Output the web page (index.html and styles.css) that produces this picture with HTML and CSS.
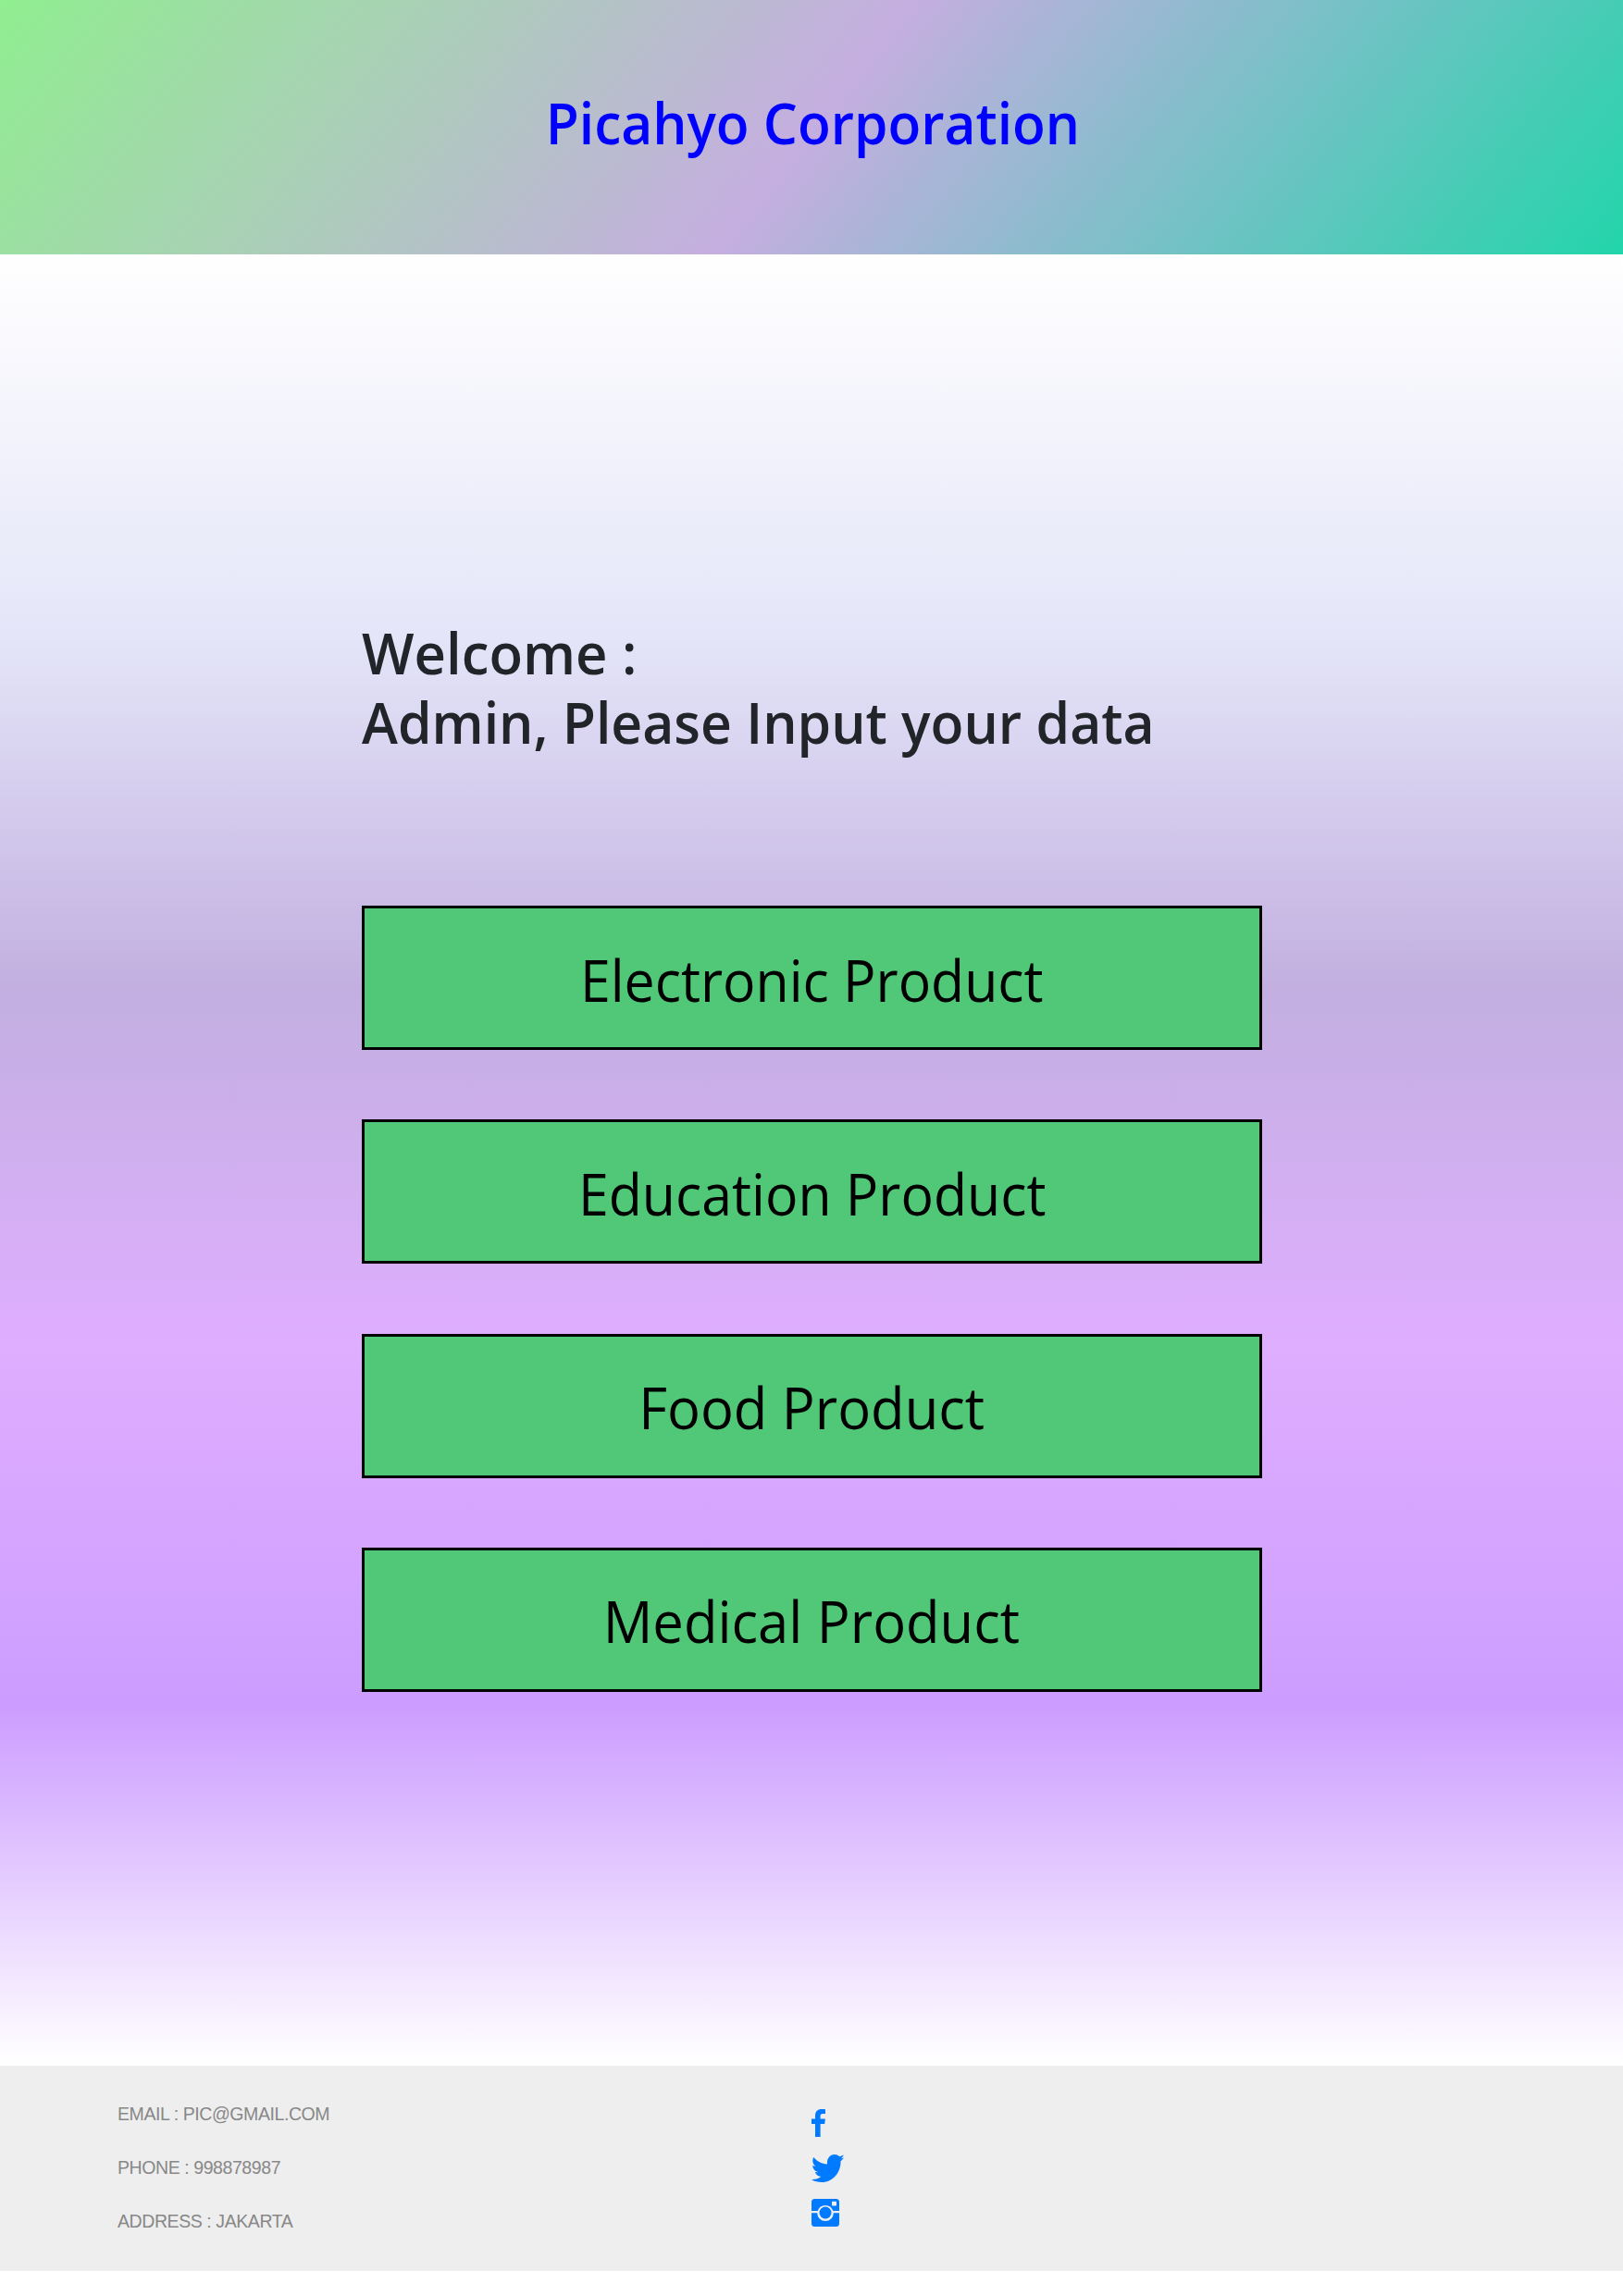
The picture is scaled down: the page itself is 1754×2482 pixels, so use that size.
FILE: index.html
```html
<!DOCTYPE html>
<html lang="en">
<head>
<meta charset="utf-8">
<title>Picahyo Corporation</title>
<link rel="stylesheet" href="styles.css">
</head>
<body>
<header class="banner"><h1 class="brand"><span class="brand-text">Picahyo Corporation</span></h1></header>
<main class="content">
  <h2 class="welcome"><span class="line welcome-line">Welcome :</span><span class="line prompt-line">Admin, Please Input your data</span></h2>
  <nav class="products">
    <a class="product"><span class="label electronic">Electronic Product</span></a>
    <a class="product"><span class="label education">Education Product</span></a>
    <a class="product"><span class="label food">Food Product</span></a>
    <a class="product"><span class="label medical">Medical Product</span></a>
  </nav>
</main>
<footer class="footer">
  <div class="contact">
    <p>EMAIL : PIC@GMAIL.COM</p>
    <p>PHONE : 998878987</p>
    <p>ADDRESS : JAKARTA</p>
  </div>
  <div class="social">
    <svg class="icon" width="15" height="30" viewBox="0 0 15 30"><path d="M15 .2V5h-2.8C10 5 9.6 6 9.600 7.500V10.600H14.900L14.200 16H9.600V30H4V16H0V10.600H4V7C4 2.500 6.800 0 11 0c1.900 0 3.500.1 4 .2Z"/></svg>
    <svg class="icon" width="35" height="30" viewBox="0 0 35 30"><path d="M35 3.600c-1 1.400-2.100 2.600-3.500 3.600v1C31.500 18.500 24 30 11 30 7 30 3.200 29.300 0 27c4 .3 7.500-.8 10.300-3-3-.1-5.500-2.100-6.400-4.900 1 .2 2.100.2 3.100-.1C3.500 18.200 1.200 15.300 1.300 11.800c1 .6 2.100.9 3.200.9C1.500 10.600.3 6.500 2.300 3 5.900 7.500 11.200 10.200 17.100 10.500 16 5 20 0 24.800 0c2.100 0 4 .9 5.300 2.300 1.600-.3 3.200-.9 4.600-1.700-.5 1.700-1.700 3.100-3.200 4 1.400-.2 2.500-.5 3.500-1Z"/></svg>
    <svg class="icon" width="30" height="30" viewBox="0 0 30 30"><path fill-rule="evenodd" d="M3.500 0h23A3.500 3.500 0 0 1 30 3.500V13H23.300A8.700 8.700 0 0 0 6.700 13H0V3.500A3.500 3.500 0 0 1 3.500 0ZM22.800 2.800a.8.8 0 0 0-.8.8V6.800a.8.8 0 0 0 .8.8H26.200a.8.8 0 0 0 .8-.8V3.600a.8.8 0 0 0-.8-.8ZM0 15.300H6.200A8.700 8.700 0 0 0 23.800 15.300H30V26.500A3.500 3.500 0 0 1 26.500 30h-23A3.500 3.500 0 0 1 0 26.500Z"/><circle cx="15" cy="15" r="6.500"/></svg>
  </div>
</footer>
</body>
</html>
```
FILE: styles.css
```css
* { box-sizing: border-box; }
body { margin: 0; background: #fff; font-family: "Open Sans", "Noto Sans", sans-serif; }
h1, h2, p { margin: 0; }
.banner { height: 275px; padding: 95px 0 0 2px; background: linear-gradient(128deg, #90ee90, #c5aee0 50%, #22d5aa); text-align: center; }
.brand { font-size: 62px; line-height: 75px; font-weight: 600; color: #00f; white-space: nowrap; }
.brand-text { display: inline-block; transform: scaleX(0.945); }
.content { height: 1958px; padding: 393px 390.5px 0 391px; background: linear-gradient(#fff, #e4e5f8 21.2%, #c2afe0 40.6%, #dfaeff 60.2%, #cc9dff 80.3%, #fff); }
.welcome { font-size: 62px; line-height: 75px; font-weight: 600; color: #212529; white-space: nowrap; }
.line { display: block; width: max-content; transform-origin: left; }
.welcome-line { transform: scaleX(0.965); }
.prompt-line { transform: scaleX(0.949); }
.products { display: grid; gap: 75.3px; margin-top: 161px; }
.product { display: flex; align-items: center; justify-content: center; height: 156px; padding-top: 3px; border: 3px solid #000; background: #50c878; color: #000; font-size: 62px; line-height: 84px; }
.label { white-space: nowrap; }
.electronic, .education { transform: scaleX(0.951); }
.food, .medical { transform: scaleX(0.963); }
.footer { display: grid; grid-template-columns: 750px 1fr; height: 222px; padding: 35px 127px; background: #eee; }
.contact { display: grid; grid-auto-rows: 58px; font: 19.5px/34px "Liberation Sans", Arial, sans-serif; letter-spacing: -0.42px; color: #888; }
.social { display: flex; flex-direction: column; gap: 18.5px; padding-top: 12px; }
.icon { display: block; fill: #007bff; }
```
